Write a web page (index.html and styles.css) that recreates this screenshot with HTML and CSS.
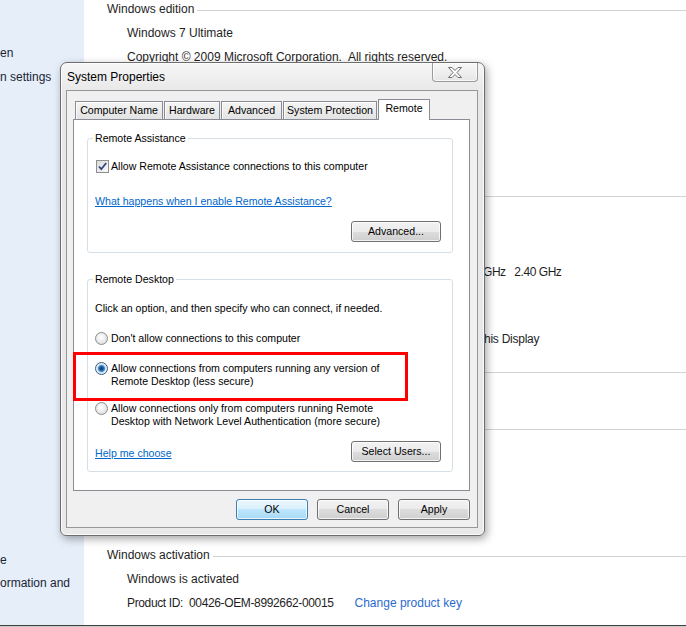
FILE: index.html
```html
<!DOCTYPE html>
<html lang="en">
<head>
<meta charset="utf-8">
<title>System Properties</title>
<link rel="stylesheet" href="styles.css">
</head>
<body>
<div class="desktop">
  <aside class="side">
    <div class="side-link s1">en</div>
    <div class="side-link s2">n settings</div>
    <div class="side-link s3">e</div>
    <div class="side-link s4">ormation and</div>
  </aside>
  <main class="content">
    <div class="section-head h-edition"><span>Windows edition</span></div>
    <div class="row r-ultimate">Windows 7 Ultimate</div>
    <div class="row r-copy">Copyright © 2009 Microsoft Corporation.&nbsp; All rights reserved.</div>
    <div class="rule rule-system"></div>
    <div class="row r-proc">GHz&nbsp;&nbsp; 2.40 GHz</div>
    <div class="row r-pen">his Display</div>
    <div class="rule rule-computer"></div>
    <div class="rule rule-extra"></div>
    <div class="section-head h-activation"><span>Windows activation</span></div>
    <div class="row r-activated">Windows is activated</div>
    <div class="row r-pid"><span class="pid">Product ID:&nbsp; 00426-OEM-8992662-00015</span><a class="cp-link">Change product key</a></div>
  </main>
</div>

<div class="dialog">
  <div class="titlebar">
    <span class="title">System Properties</span>
    <button class="close" aria-label="Close">
      <svg width="14" height="11" viewBox="0 0 14 11"><polygon points="0.5,0.5 4,0.5 7,3.5 10,0.5 13.5,0.5 9,5.5 13.5,10.5 10,10.5 7,7.5 4,10.5 0.5,10.5 5,5.5" fill="#fdfdfd" stroke="#6f6f6f" stroke-width="1" stroke-linejoin="round"/></svg>
    </button>
  </div>
  <div class="client">
    <div class="tabs">
      <div class="tab t1">Computer Name</div>
      <div class="tab t2">Hardware</div>
      <div class="tab t3">Advanced</div>
      <div class="tab t4">System Protection</div>
      <div class="tab t5 active">Remote</div>
    </div>
    <div class="tabpage">
      <fieldset class="group g1">
        <legend>Remote Assistance</legend>
        <div class="check-row">
          <span class="checkbox"><svg width="11" height="11" viewBox="0 0 11 11"><path d="M2 5.5 L4.3 8.2 L9.2 2" fill="none" stroke="#30437e" stroke-width="1.8"/></svg></span>
          <span>Allow Remote Assistance connections to this computer</span>
        </div>
        <a class="link l1">What happens when I enable Remote Assistance?</a>
        <div class="btn-row"><button class="btn wide">Advanced...</button></div>
      </fieldset>
      <fieldset class="group g2">
        <legend>Remote Desktop</legend>
        <p class="note">Click an option, and then specify who can connect, if needed.</p>
        <div class="radio-row rr1"><span class="radio"></span><span>Don't allow connections to this computer</span></div>
        <div class="radio-row rr2"><span class="radio on"></span><span>Allow connections from computers running any version of<br>Remote Desktop (less secure)</span></div>
        <div class="radio-row rr3"><span class="radio"></span><span>Allow connections only from computers running Remote<br>Desktop with Network Level Authentication (more secure)</span></div>
        <div class="foot-row"><a class="link">Help me choose</a><button class="btn wide">Select Users...</button></div>
      </fieldset>
    </div>
    <div class="dlg-buttons">
      <button class="btn default">OK</button>
      <button class="btn">Cancel</button>
      <button class="btn">Apply</button>
    </div>
  </div>
  <div class="highlight"></div>
</div>
</body>
</html>
```

FILE: styles.css
```css
* { box-sizing: border-box; }
html, body { margin: 0; padding: 0; }
body {
  width: 686px;
  height: 627px;
  overflow: hidden;
  position: relative;
  background: #c9c9c9;
  font-family: "Liberation Sans", Arial, sans-serif;
  font-size: 12px;
  color: #1e1e1e;
}

/* ---------- background window ---------- */
.desktop {
  display: grid;
  grid-template-columns: 84px 1fr;
  height: 626px;
  border-bottom: 1px solid #404040;
  background: #fff;
}
.side {
  background: #e5eef9;
  display: flex;
  flex-direction: column;
  line-height: 16px;
  color: #1b2436;
  white-space: nowrap;
  overflow: hidden;
}
.s1 { margin-top: 45px; }
.s2 { margin-top: 8px; }
.s3 { margin-top: 467px; }
.s4 { margin-top: 7px; }

.content {
  display: flex;
  flex-direction: column;
  padding-left: 23px;
  line-height: 16px;
  white-space: nowrap;
  min-width: 0;
  overflow: hidden;
}
.section-head { display: flex; align-items: center; gap: 3px; }
.section-head::after {
  content: "";
  flex: 1;
  height: 1px;
  margin-top: 2px;
  background: #d2d2d2;
}
.rule { height: 1px; background: #d2d2d2; }
.row { padding-left: 20px; }
.h-edition { margin-top: 1px; }
.r-ultimate { margin-top: 8px; }
.r-copy { margin-top: 8px; }
.rule-system { margin-top: 131px; }
.r-proc { margin-top: 67px; padding-left: 376px; letter-spacing: -0.45px; }
.r-pen { margin-top: 51px; padding-left: 377px; letter-spacing: -0.25px; }
.rule-computer { margin-top: 25px; }
.rule-extra { margin-top: 56px; }
.h-activation { margin-top: 117px; }
.r-activated { margin-top: 8px; }
.r-pid { margin-top: 8px; display: flex; gap: 21px; }
.pid { letter-spacing: -0.36px; }
.cp-link { color: #2a6ad0; }

/* ---------- dialog ---------- */
.dialog {
  position: absolute;
  left: 60px;
  top: 62px;
  width: 425px;
  height: 474px;
  border: 1px solid #6d6d6d;
  border-radius: 7px 7px 6px 6px;
  background: linear-gradient(#f6f6f6, #e7e7e7 30px, #e9e9e9);
  box-shadow: 2px 3px 8px rgba(0, 0, 0, 0.35), inset 0 0 0 1px rgba(255, 255, 255, 0.8);
  display: flex;
  flex-direction: column;
  font-size: 10.6px;
  color: #000;
}
.titlebar {
  height: 27px;
  display: flex;
  justify-content: space-between;
  align-items: flex-start;
  padding: 0 6px;
}
.title { font-size: 12px; line-height: 27px; padding-top: 1px; }
.close {
  width: 46px;
  height: 19px;
  padding: 0;
  border: 1px solid #9a9a9a;
  border-top: none;
  border-radius: 0 0 4px 4px;
  background: linear-gradient(#f8f8f8, #e6e6e6);
  box-shadow: inset 0 0 0 1px rgba(255, 255, 255, 0.7);
  display: flex;
  align-items: center;
  justify-content: center;
}
.client {
  margin: 0 6px 0 5px;
  height: 438px;
  border: 1px solid #979797;
  background: #f0f0f0;
  padding: 8px 7px 0 6px;
  display: flex;
  flex-direction: column;
}
.tabs {
  display: flex;
  height: 20px;
  padding-left: 2px;
  gap: 1px;
  align-items: flex-end;
  position: relative;
  z-index: 1;
}
.tab {
  height: 18px;
  border: 1px solid #898c95;
  border-bottom: none;
  background: linear-gradient(#f4f4f4, #e3e3e3);
  box-shadow: inset 1px 1px 0 rgba(255, 255, 255, 0.8);
  line-height: 17px;
  text-align: center;
  white-space: nowrap;
}
.t1 { width: 88px; }
.t2 { width: 56px; }
.t3 { width: 61px; }
.t4 { width: 94px; }
.t5 { width: 52px; }
.tab.active {
  height: 21px;
  margin-bottom: -1px;
  background: #fff;
  box-shadow: none;
  line-height: 17px;
}
.tabpage {
  height: 372px;
  border: 1px solid #898c95;
  background: #fff;
  padding: 11px 16px 0 13px;
}
.group {
  margin: 0;
  padding: 0 11px 10px 7px;
  border: 1px solid #d5dfe5;
  border-radius: 3px;
  min-width: 0;
}
.group legend { padding: 0 2px; margin-left: -2px; line-height: 14px; }
.g2 { margin-top: 19px; padding-bottom: 9px; }

.check-row { display: flex; gap: 2px; margin-top: 15px; line-height: 13px; }
.checkbox {
  flex: none;
  width: 13px;
  height: 13px;
  margin-left: 1px;
  border: 1px solid #8e8f8f;
  background: linear-gradient(135deg, #dadada, #fbfbfb);
  display: flex;
}
.link { color: #0066cc; text-decoration: underline; line-height: 13px; }
.l1 { display: block; width: max-content; margin-top: 22px; }
.btn-row { margin-top: 13px; display: flex; justify-content: flex-end; }
.btn {
  width: 72px;
  height: 21px;
  padding: 0;
  border: 1px solid #707070;
  border-radius: 3px;
  background: linear-gradient(#f2f2f2 0%, #ebebeb 50%, #dddddd 50%, #cfcfcf 100%);
  box-shadow: inset 0 0 0 1px rgba(255, 255, 255, 0.75);
  font: inherit;
  color: #000;
  line-height: 19px;
}
.btn.wide { width: 90px; }
.btn.default {
  border-color: #3c7fb1;
  background: linear-gradient(#eaf6fd 0%, #d9f0fc 50%, #bee6fd 50%, #a7d9f5 100%);
}
.note { margin: 16px 0 0; line-height: 13px; }
.radio-row { display: flex; gap: 3px; line-height: 13px; }
.rr1 { margin-top: 17px; }
.rr2 { margin-top: 17px; }
.rr3 { margin-top: 14px; }
.radio {
  flex: none;
  width: 13px;
  height: 13px;
  border-radius: 50%;
  border: 1px solid #8c8c8c;
  background: radial-gradient(circle at 45% 40%, #ffffff 0, #f2f2f2 35%, #d2d2d2 100%);
}
.radio.on {
  border-color: #2c628b;
  background: radial-gradient(circle at 50% 50%, #0b3666 0, #1c5e9e 1.8px, #3f8ad2 3px, #86bff0 3.6px, #e6e6e6 4.2px, #f7f7f7 100%);
}
.foot-row {
  margin-top: 13px;
  display: flex;
  justify-content: space-between;
  align-items: center;
}
.foot-row .link { padding-top: 3px; }
.dlg-buttons {
  margin-top: 8px;
  display: flex;
  justify-content: flex-end;
  gap: 9px;
}
.highlight {
  position: absolute;
  left: 12px;
  top: 289px;
  width: 335px;
  height: 49px;
  border: 3px solid #ff0000;
}
```
